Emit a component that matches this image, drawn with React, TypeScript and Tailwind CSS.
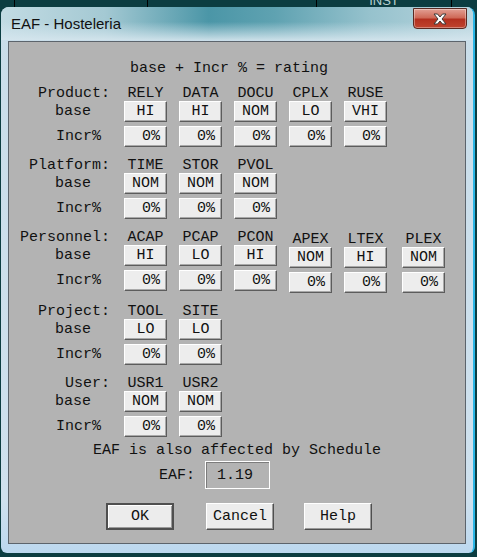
import React from "react"

type Col = { name: string; base: string; shift?: boolean; extra?: boolean }

function Cell({ children, right }: { children: string; right?: boolean }) {
  return (
    <div
      className={`flex h-[21px] w-[43px] items-center border border-t-white border-l-white border-b-[#5c5c5c] border-r-[#5c5c5c] bg-[#ededed] shadow-[inset_-1px_-1px_0_#a9a9a9] ${
        right ? "justify-end pr-[6px]" : "justify-center"
      }`}
    >
      {children}
    </div>
  )
}

function Section({ label, cols }: { label: string; cols: Col[] }) {
  return (
    <div className="flex gap-[12px]">
      <div className="flex w-[103px] flex-col">
        <div className="h-[15px] pr-[2px] text-right">{label}</div>
        <div className="flex h-[21px] items-center pl-[46px]">base</div>
        <div className="mt-[4px] flex h-[21px] items-center pl-[47px]">Incr%</div>
      </div>
      {cols.map((c) => (
        <div
          key={c.name}
          className={`flex flex-col items-center ${c.shift ? "pt-[2px]" : ""} ${c.extra ? "ml-[3px]" : ""}`}
        >
          <div className="h-[15px]">{c.name}</div>
          <Cell>{c.base}</Cell>
          <div className="mt-[4px]">
            <Cell right>0%</Cell>
          </div>
        </div>
      ))}
    </div>
  )
}

const sections: { label: string; cols: Col[] }[] = [
  {
    label: "Product:",
    cols: [
      { name: "RELY", base: "HI" },
      { name: "DATA", base: "HI" },
      { name: "DOCU", base: "NOM" },
      { name: "CPLX", base: "LO" },
      { name: "RUSE", base: "VHI" },
    ],
  },
  {
    label: "Platform:",
    cols: [
      { name: "TIME", base: "NOM" },
      { name: "STOR", base: "NOM" },
      { name: "PVOL", base: "NOM" },
    ],
  },
  {
    label: "Personnel:",
    cols: [
      { name: "ACAP", base: "HI" },
      { name: "PCAP", base: "LO" },
      { name: "PCON", base: "HI" },
      { name: "APEX", base: "NOM", shift: true },
      { name: "LTEX", base: "HI", shift: true },
      { name: "PLEX", base: "NOM", shift: true, extra: true },
    ],
  },
  {
    label: "Project:",
    cols: [
      { name: "TOOL", base: "LO" },
      { name: "SITE", base: "LO" },
    ],
  },
  {
    label: "User:",
    cols: [
      { name: "USR1", base: "NOM" },
      { name: "USR2", base: "NOM" },
    ],
  },
]

export default function App() {
  return (
    <div className="flex h-[557px] w-[477px] flex-col overflow-hidden bg-[#0c3d41]">
      {/* desktop behind the window */}
      <div className="flex h-[7px] shrink-0 overflow-hidden">
        <div className="w-[15px] border-r border-black" />
        <div className="w-[133px] border-r border-black" />
        <div className="w-[169px] border-r border-black" />
        <div className="flex w-[135px] justify-center border-r border-black">
          <span className="-mt-[9px] font-['Liberation_Sans',sans-serif] text-[13px] text-[#b8d0d0]">INST</span>
        </div>
      </div>

      {/* window */}
      <div className="ml-[1px] flex h-[546px] w-[474px] flex-col overflow-hidden rounded-t-[8px] rounded-b-[6px] border-r-2 border-r-[#2ab6e6] bg-[linear-gradient(180deg,#c9dde9_0%,#cfe1ee_90%,#bcd8ef_100%)]">
        {/* title bar */}
        <div className="flex h-[33px] shrink-0 items-start bg-[linear-gradient(180deg,rgba(255,255,255,0)_45%,rgba(214,230,238,0.9)_100%),linear-gradient(90deg,#c2dbe3_0%,#a4c9d3_22%,#4b96a7_44%,#5fa2b1_58%,#96c2cd_78%,#b9d5de_100%)]">
          <span className="mt-[8px] ml-[10px] font-['Liberation_Sans',sans-serif] text-[15px] leading-[17px] text-[#111]">
            EAF - Hosteleria
          </span>
          <div className="ml-auto mr-[6px] mt-[1px] flex h-[21px] w-[54px] items-center justify-center rounded-b-[4px] border border-[#5b2a22] bg-[linear-gradient(180deg,#e2a094_0%,#cf6a58_45%,#b3301f_55%,#c0442e_100%)] shadow-[inset_0_0_0_1px_rgba(255,255,255,0.35)]">
            <svg width="16" height="12" viewBox="0 0 16 12">
              <path
                d="M2 1 L5.5 1 L8 4 L10.5 1 L14 1 L10 6 L14 11 L10.5 11 L8 8 L5.5 11 L2 11 L6 6 Z"
                fill="#ffffff"
                stroke="#3a3a3a"
                strokeWidth="1"
                strokeLinejoin="round"
              />
            </svg>
          </div>
        </div>

        {/* client area */}
        <div className="mx-[7px] mt-[1px] flex h-[503px] flex-col border border-[#5c646c] bg-[#b3b3b3] font-['Liberation_Mono',monospace] text-[15px] leading-[15px] text-[#111]">
          <div className="ml-[121px] mt-[19px]">base + Incr % = rating</div>

          <div className="mt-[10px] flex flex-col gap-[11px]">
            {sections.map((s) => (
              <Section key={s.label} label={s.label} cols={s.cols} />
            ))}
          </div>

          <div className="mt-[6px] text-center">EAF is also affected by Schedule</div>

          <div className="mt-[3px] flex items-center">
            <span className="ml-[150px] w-[46px]">EAF:</span>
            <div className="flex h-[28px] w-[65px] items-center border border-white pl-[11px] shadow-[inset_1px_1px_0_#7c7c7c]">
              1.19
            </div>
          </div>

          <div className="mt-[14px] flex items-center">
            <button className="ml-[97px] h-[27px] w-[68px] border-2 border-[#4f4f4f] bg-[#ececec] shadow-[inset_1px_1px_0_#ffffff,inset_-1px_-1px_0_#9a9a9a]">
              OK
            </button>
            <button className="ml-[32px] h-[27px] w-[68px] border border-t-white border-l-white border-b-[#4f4f4f] border-r-[#4f4f4f] bg-[#ececec] shadow-[inset_-1px_-1px_0_#9a9a9a]">
              Cancel
            </button>
            <button className="ml-[30px] h-[27px] w-[68px] border border-t-white border-l-white border-b-[#4f4f4f] border-r-[#4f4f4f] bg-[#ececec] shadow-[inset_-1px_-1px_0_#9a9a9a]">
              Help
            </button>
          </div>
        </div>
      </div>
    </div>
  )
}
